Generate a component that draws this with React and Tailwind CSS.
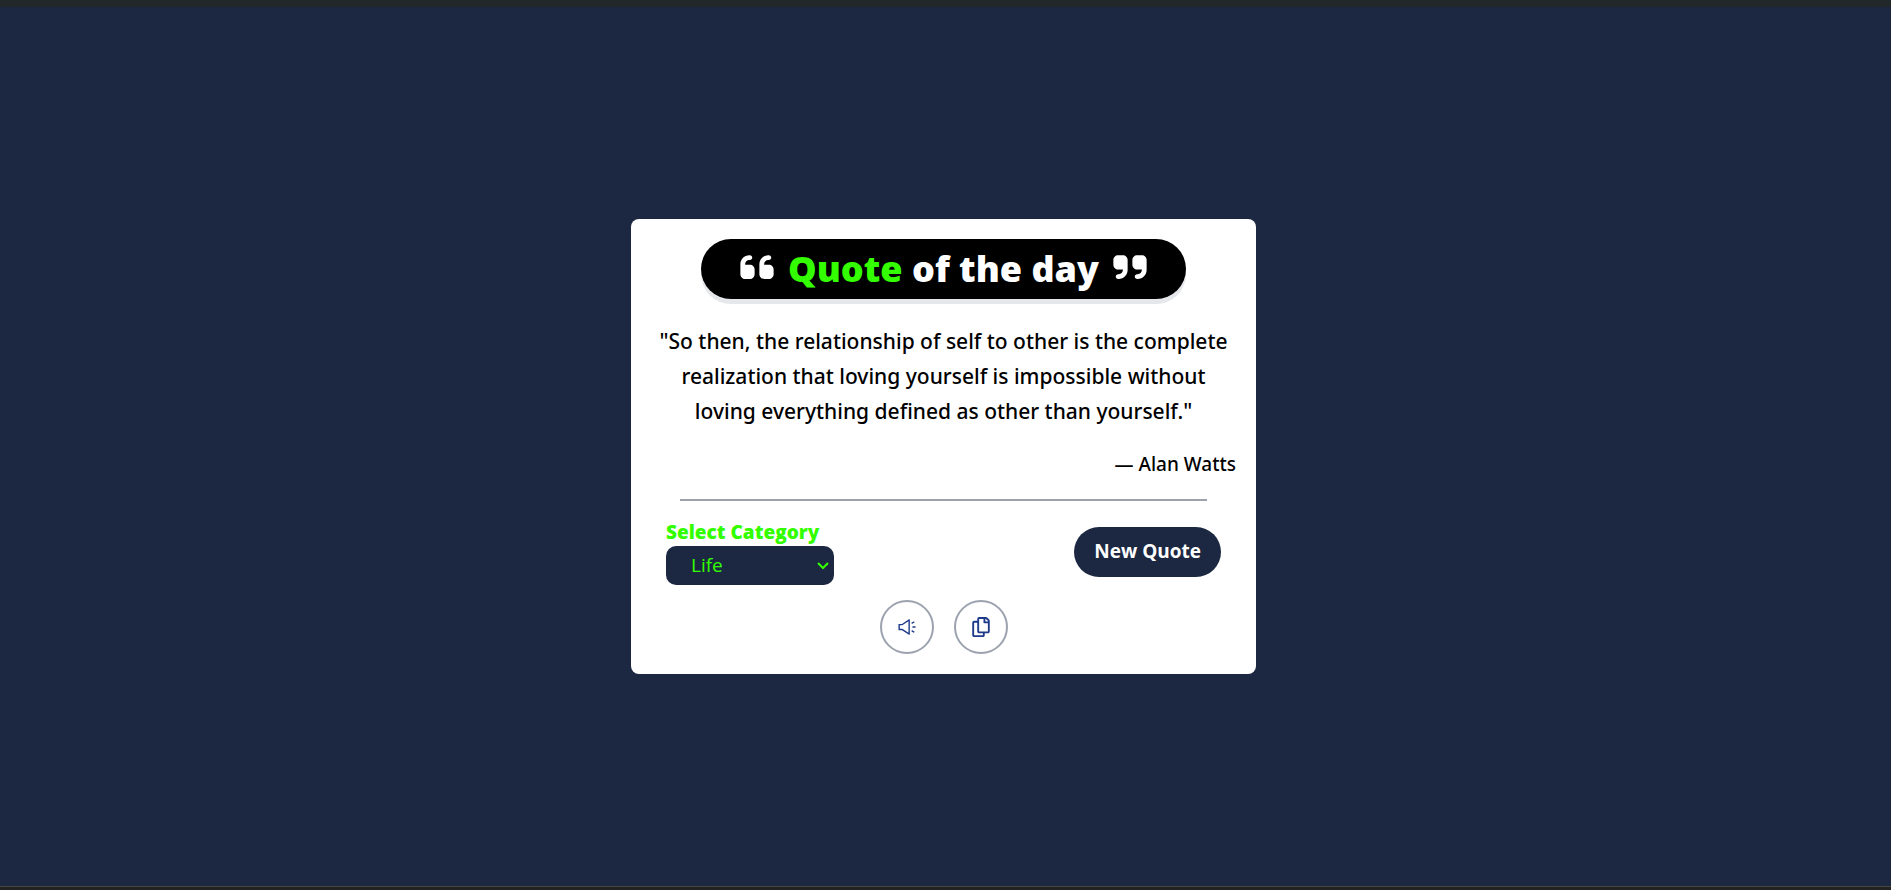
import { useState } from "react";
import { FaQuoteLeft, FaQuoteRight } from "react-icons/fa6";
import { FaRegCopy } from "react-icons/fa";
import { AiOutlineSound } from "react-icons/ai";

const categories = ["Life", "Love", "Wisdom", "Happiness", "Success"];

function RoundButton({ label, children }) {
  return (
    <button
      type="button"
      aria-label={label}
      className="flex size-[54px] items-center justify-center rounded-full border-2 border-[#9ca3af] text-xl text-[#1e3a8a]"
    >
      {children}
    </button>
  );
}

function QuoteCard() {
  const [category, setCategory] = useState("Life");
  return (
    <section className="flex w-full max-w-[625px] flex-col rounded-lg bg-white p-5 text-black">
      <h1 className="flex h-[60px] items-center gap-3 self-center rounded-full bg-black px-[37px] text-4xl font-extrabold text-white shadow-[0_5px_0_#e5e7eb]">
        <FaQuoteLeft className="mb-1 size-[38px]" />
        <span className="whitespace-nowrap">
          <span className="text-[#33ff00]">Quote</span> of the day
        </span>
        <FaQuoteRight className="mb-1 size-[38px]" />
      </h1>

      <blockquote className="mt-[25px] text-center font-['Noto_Sans','Open_Sans',sans-serif] text-[21px] leading-[35px] font-medium">
        "So then, the relationship of self to other is the complete realization that loving
        yourself is impossible without loving everything defined as other than yourself."
      </blockquote>
      <p className="mt-5 text-right font-['Noto_Sans','Open_Sans',sans-serif] text-[19px] leading-[30px] font-medium">
        — Alan Watts
      </p>

      <hr className="mx-[29px] mt-5 border-t-2 border-[#9ca3af]" />

      <div className="mt-[17px] flex items-center justify-between px-[15px]">
        <div className="flex flex-col">
          <label htmlFor="category" className="text-[19px] leading-7 font-extrabold text-[#33ff00]">
            Select Category
          </label>
          <span className="relative flex">
            <select
              id="category"
              value={category}
              onChange={(event) => setCategory(event.target.value)}
              className="h-[39px] w-[168px] appearance-none rounded-[10px] bg-[#1c2841] pr-6 pl-[25px] text-[19px] text-[#33ff00]"
            >
              {categories.map((name) => (
                <option key={name}>{name}</option>
              ))}
            </select>
            <svg
              viewBox="0 0 12 8"
              aria-hidden="true"
              className="pointer-events-none absolute top-4 right-[5px] h-2 w-3 fill-none stroke-[#33ff00] stroke-2"
            >
              <path d="M1 1l5 5 5-5" />
            </svg>
          </span>
        </div>
        <button
          type="button"
          className="h-[50px] rounded-full bg-[#1c2841] px-5 text-[19px] font-bold text-white"
        >
          New Quote
        </button>
      </div>

      <div className="mt-[15px] flex justify-center gap-5">
        <RoundButton label="Read aloud">
          <AiOutlineSound />
        </RoundButton>
        <RoundButton label="Copy quote">
          <FaRegCopy />
        </RoundButton>
      </div>
    </section>
  );
}

export default function App() {
  return (
    <main className="flex min-h-screen flex-col bg-[#1c2841] font-['Open_Sans','Noto_Sans',sans-serif]">
      <div className="h-[7px] bg-[#22272a]" />
      <div className="flex grow items-center justify-center pr-1">
        <QuoteCard />
      </div>
      <div className="h-1 border-t border-[#46473f] bg-[#222222]" />
    </main>
  );
}
